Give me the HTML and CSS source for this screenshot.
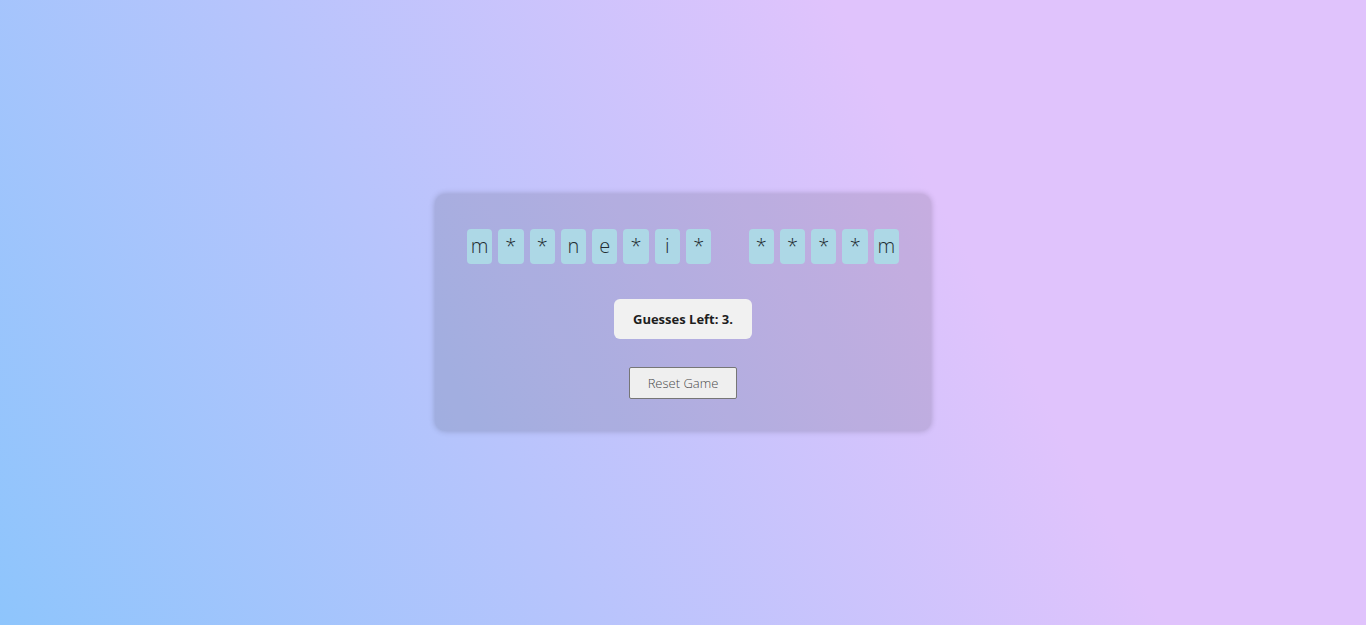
FILE: index.html
```html
<!DOCTYPE html>
<html lang="en">
<head>
<meta charset="utf-8">
<title>Hangman</title>
<link rel="stylesheet" href="styles.css">
</head>
<body>
<main class="page">
  <section class="card">
    <div class="word">
      <span class="tile">m</span>
      <span class="tile">*</span>
      <span class="tile">*</span>
      <span class="tile">n</span>
      <span class="tile">e</span>
      <span class="tile">*</span>
      <span class="tile">i</span>
      <span class="tile">*</span>
      <span class="tile space"></span>
      <span class="tile">*</span>
      <span class="tile">*</span>
      <span class="tile">*</span>
      <span class="tile">*</span>
      <span class="tile">m</span>
    </div>
    <p class="status">Guesses Left: 3.</p>
    <button class="reset" type="button">Reset Game</button>
  </section>
</main>
</body>
</html>
```
FILE: styles.css
```css
html, body {
  margin: 0;
  height: 100%;
}
body {
  font-family: "Lato", "Open Sans", sans-serif;
  background-image: linear-gradient(62deg, #8ec5fc 0%, #e0c3fc 68.6%, #e0c3fc 100%);
}
.page {
  height: 100%;
  display: flex;
  align-items: center;
  justify-content: center;
}
.card {
  width: 496px;
  box-sizing: border-box;
  padding: 35px 32px 32px;
  border-radius: 10px;
  background: rgba(0, 0, 0, 0.11);
  box-shadow: 0 0 6px rgba(0, 0, 0, 0.22);
  display: flex;
  flex-direction: column;
  align-items: center;
}
.word {
  display: flex;
  justify-content: center;
}
.tile {
  width: 25.3px;
  height: 35px;
  margin: 0 3px;
  border-radius: 4px;
  background: #add8e6;
  color: #222c31;
  font-family: "Open Sans", "Lato", sans-serif;
  font-size: 20px;
  font-weight: 300;
  line-height: 33px;
  text-align: center;
}
.tile.space {
  background: transparent;
}
.status {
  margin: 35px 0 0;
  width: 138px;
  height: 40px;
  line-height: 40px;
  text-align: center;
  border-radius: 6px;
  background: #f1f1f1;
  color: #1e1e1e;
  font-family: "Open Sans", "Lato", sans-serif;
  font-size: 13px;
  font-weight: 700;
}
.reset {
  margin-top: 28px;
  width: 108px;
  height: 32px;
  border: 1px solid #767676;
  border-radius: 2px;
  background: #efefef;
  color: #4a4a4a;
  font-family: "Open Sans", "Lato", sans-serif;
  font-size: 13px;
  font-weight: 300;
  padding: 0;
}
```
